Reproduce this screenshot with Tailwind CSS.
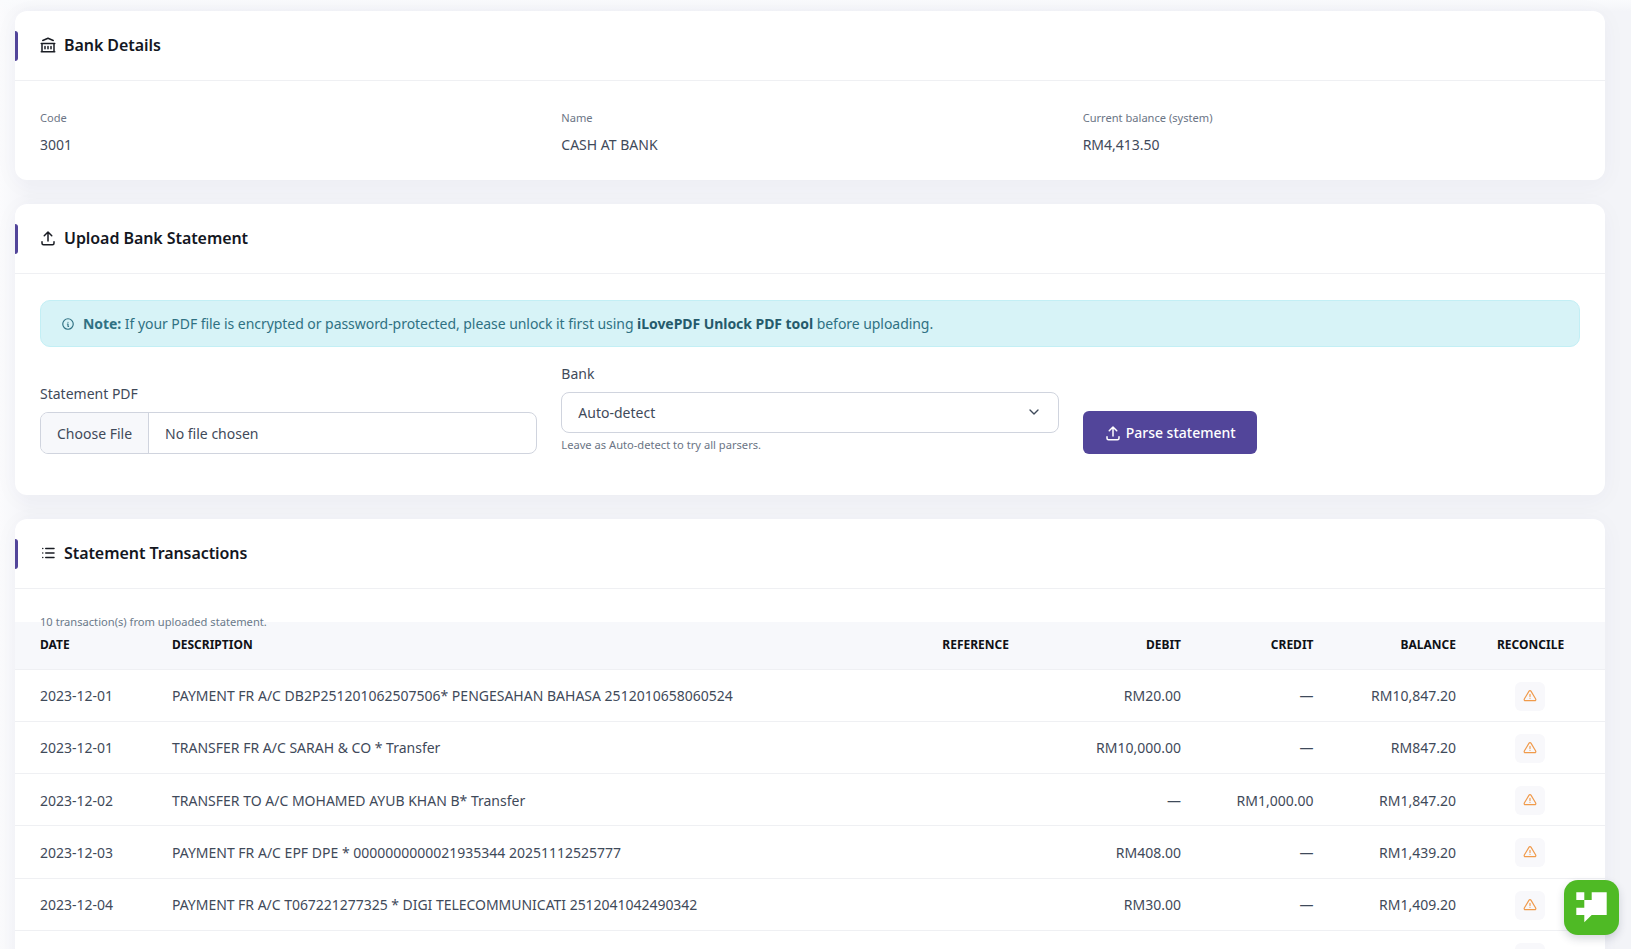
<!DOCTYPE html>
<html lang="en">
<head>
    <meta charset="UTF-8">
    <title>Bank Reconciliation</title>
    <script src="https://cdn.jsdelivr.net/npm/@tailwindcss/browser@4"></script>
</head>
<body class="h-screen overflow-hidden bg-[#f3f4f8] bg-[linear-gradient(180deg,#fafbfd,transparent_12px),linear-gradient(90deg,#fbfbfd,#f3f4f8_30px)] font-['Noto_Sans',sans-serif] text-sm text-[#3f4a5a]">

    <main class="pt-[11px] pl-[15px] pr-[26px] flex flex-col gap-6">

        <!-- Bank details -->
        <section class="bg-white rounded-xl shadow-[0_4px_24px_rgba(50,60,100,0.04)]">
            <header class="relative h-[70px] pl-[25px] pb-[2px] flex items-center gap-[7px] border-b border-[#eff0f3]">
                <span class="absolute left-0 top-5 w-[3px] h-[30px] bg-[#52459a] rounded-r-sm"></span>
                <svg class="-ml-px w-[18px] h-[18px]" viewBox="0 0 24 24" fill="none" stroke="#1a1d24" stroke-width="2" stroke-linecap="round" stroke-linejoin="round"><path d="M3 21l18 0M3 10l18 0M5 6l7 -3l7 3M4 10l0 11M20 10l0 11M8 14l0 3M12 14l0 3M16 14l0 3"/></svg>
                <h2 class="text-base font-semibold tracking-[-0.07px] text-[#14171f]">Bank Details</h2>
            </header>
            <div class="grid grid-cols-3 gap-x-6 px-[25px] pt-[29px] pb-[25px]">
                <div>
                    <p class="text-[11.1px] leading-[16px] text-[#6b7585] mb-2">Code</p>
                    <p class="leading-[21px]">3001</p>
                </div>
                <div>
                    <p class="text-[11.1px] leading-[16px] text-[#6b7585] mb-2">Name</p>
                    <p class="leading-[21px]">CASH AT BANK</p>
                </div>
                <div>
                    <p class="text-[11.1px] leading-[16px] text-[#6b7585] mb-2">Current balance (system)</p>
                    <p class="leading-[21px]">RM4,413.50</p>
                </div>
            </div>
        </section>

        <!-- Upload -->
        <section class="bg-white rounded-xl shadow-[0_4px_24px_rgba(50,60,100,0.04)]">
            <header class="relative h-[70px] pl-[25px] pb-[2px] flex items-center gap-[7px] border-b border-[#eff0f3]">
                <span class="absolute left-0 top-5 w-[3px] h-[30px] bg-[#52459a] rounded-r-sm"></span>
                <svg class="-ml-px w-[18px] h-[18px]" viewBox="0 0 24 24" fill="none" stroke="#1a1d24" stroke-width="2" stroke-linecap="round" stroke-linejoin="round"><path d="M4 17v2a2 2 0 0 0 2 2h12a2 2 0 0 0 2 -2v-2M7 9l5 -5l5 5M12 4l0 12"/></svg>
                <h2 class="text-base font-semibold tracking-[-0.07px] text-[#14171f]">Upload Bank Statement</h2>
            </header>
            <div class="px-[25px] pt-[26px] pb-[41px]">
                <div class="h-[47px] mb-4 pl-5 flex items-center gap-2 rounded-[10px] border border-[#c3eff5] bg-[#d7f3f7] text-[#2f7183]">
                    <svg class="w-[14px] h-[14px]" viewBox="0 0 24 24" fill="none" stroke="currentColor" stroke-width="2" stroke-linecap="round" stroke-linejoin="round"><path d="M3 12a9 9 0 1 0 18 0a9 9 0 0 0 -18 0M12 9h.01M11 12h1v4h1"/></svg>
                    <p class="tracking-[-0.05px]"><b class="font-bold">Note:</b> If your PDF file is encrypted or password-protected, please unlock it first using <b class="font-bold text-[#255a6b]">iLovePDF Unlock PDF tool</b> before uploading.</p>
                </div>
                <form class="grid grid-cols-3 gap-x-6 items-end">
                    <div>
                        <label class="block leading-[21px] mb-2">Statement PDF</label>
                        <input type="file" class="block w-full h-[42px] rounded-lg border border-[#d0d4de] text-sm text-[#3f4a5a] file:h-full file:pt-[2px] file:mr-4 file:px-4 file:border-0 file:border-r file:border-solid file:border-[#d0d4de] file:bg-[#f7f8fb] file:text-sm file:text-[#3f4a5a]">
                    </div>
                    <div class="pb-px">
                        <label class="block leading-[21px] mb-2">Bank</label>
                        <div class="relative">
                            <select class="block w-full h-[41px] pl-4 appearance-none rounded-lg border border-[#d0d4de] bg-white text-sm text-[#3f4a5a]">
                                <option>Auto-detect</option>
                            </select>
                            <svg class="absolute right-[17px] top-[12px] w-4 h-4" viewBox="0 0 24 24" fill="none" stroke="#3f4a5a" stroke-width="2" stroke-linecap="round" stroke-linejoin="round"><path d="M6 9l6 6l6 -6"/></svg>
                        </div>
                        <p class="mt-1 text-[11.15px] leading-[16px] text-[#6b7585]">Leave as Auto-detect to try all parsers.</p>
                    </div>
                    <div>
                        <button type="button" class="h-[43px] w-[174px] pl-[21px] flex items-center gap-1 rounded-md bg-[#52459a] text-sm font-medium text-white">
                            <svg class="w-[18px] h-[18px]" viewBox="0 0 24 24" fill="none" stroke="currentColor" stroke-width="2" stroke-linecap="round" stroke-linejoin="round"><path d="M4 17v2a2 2 0 0 0 2 2h12a2 2 0 0 0 2 -2v-2M7 9l5 -5l5 5M12 4l0 12"/></svg>
                            Parse statement
                        </button>
                    </div>
                </form>
            </div>
        </section>

        <!-- Transactions -->
        <section class="bg-white rounded-xl shadow-[0_4px_24px_rgba(50,60,100,0.04)]">
            <header class="relative h-[70px] pl-[25px] pb-[2px] flex items-center gap-[7px] border-b border-[#eff0f3]">
                <span class="absolute left-0 top-5 w-[3px] h-[30px] bg-[#52459a] rounded-r-sm"></span>
                <svg class="-ml-px w-[18px] h-[18px]" viewBox="0 0 24 24" fill="none" stroke="#1a1d24" stroke-width="2" stroke-linecap="round" stroke-linejoin="round"><path d="M9 6l11 0M9 12l11 0M9 18l11 0M5 6l0 .01M5 12l0 .01M5 18l0 .01"/></svg>
                <h2 class="text-base font-semibold tracking-[-0.07px] text-[#14171f]">Statement Transactions</h2>
            </header>
            <p class="relative z-10 pl-[25px] pt-[25px] text-[11.15px] leading-[16px] text-[#6b7a8a]">10 transaction(s) from uploaded statement.</p>
            <table class="-mt-2 w-full table-fixed border-collapse">
                <colgroup>
                    <col class="w-[141px]">
                    <col>
                    <col class="w-[95px]">
                    <col class="w-[171px]">
                    <col class="w-[133px]">
                    <col class="w-[143px]">
                    <col class="w-[133px]">
                </colgroup>
                <thead>
                    <tr class="h-[47px] bg-[#f7f8fb] border-b border-[#eff0f3] text-xs font-bold uppercase text-[#0f1116]">
                        <th class="pl-[25px] pb-px text-left font-bold">Date</th>
                        <th class="pl-4 pb-px text-left font-bold">Description</th>
                        <th class="pr-4 pb-px text-right font-bold whitespace-nowrap">Reference</th>
                        <th class="pr-[15px] pb-px text-right font-bold">Debit</th>
                        <th class="pr-[15.5px] pb-px text-right font-bold">Credit</th>
                        <th class="pr-4 pb-px text-right font-bold">Balance</th>
                        <th class="pl-[25px] pr-[42px] pb-px text-center font-bold">Reconcile</th>
                    </tr>
                </thead>
                <tbody class="[&_td]:pt-[2px]">
                    <tr class="h-[52.25px] border-b border-[#eff0f3]">
                        <td class="pl-[25px]">2023-12-01</td>
                        <td class="pl-4">PAYMENT FR A/C DB2P251201062507506* PENGESAHAN BAHASA 2512010658060524</td>
                        <td></td>
                        <td class="pr-[15px] text-right">RM20.00</td>
                        <td class="pr-[15.5px] text-right">—</td>
                        <td class="pr-4 text-right">RM10,847.20</td>
                        <td class="pl-[25px] pr-[42px]"><button class="mx-auto w-[30px] h-[29px] pb-px flex items-center justify-center rounded-md bg-[#f8f8fb]"><svg class="w-[14px] h-[14px]" viewBox="0 0 24 24" fill="none" stroke="#f09a4a" stroke-width="2" stroke-linecap="round" stroke-linejoin="round"><path d="M12 9v4M10.363 3.591l-8.106 13.534a1.914 1.914 0 0 0 1.636 2.871h16.214a1.914 1.914 0 0 0 1.636 -2.87l-8.106 -13.536a1.914 1.914 0 0 0 -3.274 0zM12 16h.01"/></svg></button></td>
                    </tr>
                    <tr class="h-[52.25px] border-b border-[#eff0f3]">
                        <td class="pl-[25px]">2023-12-01</td>
                        <td class="pl-4">TRANSFER FR A/C SARAH &amp; CO * Transfer</td>
                        <td></td>
                        <td class="pr-[15px] text-right">RM10,000.00</td>
                        <td class="pr-[15.5px] text-right">—</td>
                        <td class="pr-4 text-right">RM847.20</td>
                        <td class="pl-[25px] pr-[42px]"><button class="mx-auto w-[30px] h-[29px] pb-px flex items-center justify-center rounded-md bg-[#f8f8fb]"><svg class="w-[14px] h-[14px]" viewBox="0 0 24 24" fill="none" stroke="#f09a4a" stroke-width="2" stroke-linecap="round" stroke-linejoin="round"><path d="M12 9v4M10.363 3.591l-8.106 13.534a1.914 1.914 0 0 0 1.636 2.871h16.214a1.914 1.914 0 0 0 1.636 -2.87l-8.106 -13.536a1.914 1.914 0 0 0 -3.274 0zM12 16h.01"/></svg></button></td>
                    </tr>
                    <tr class="h-[52.25px] border-b border-[#eff0f3]">
                        <td class="pl-[25px]">2023-12-02</td>
                        <td class="pl-4">TRANSFER TO A/C MOHAMED AYUB KHAN B* Transfer</td>
                        <td></td>
                        <td class="pr-[15px] text-right">—</td>
                        <td class="pr-[15.5px] text-right">RM1,000.00</td>
                        <td class="pr-4 text-right">RM1,847.20</td>
                        <td class="pl-[25px] pr-[42px]"><button class="mx-auto w-[30px] h-[29px] pb-px flex items-center justify-center rounded-md bg-[#f8f8fb]"><svg class="w-[14px] h-[14px]" viewBox="0 0 24 24" fill="none" stroke="#f09a4a" stroke-width="2" stroke-linecap="round" stroke-linejoin="round"><path d="M12 9v4M10.363 3.591l-8.106 13.534a1.914 1.914 0 0 0 1.636 2.871h16.214a1.914 1.914 0 0 0 1.636 -2.87l-8.106 -13.536a1.914 1.914 0 0 0 -3.274 0zM12 16h.01"/></svg></button></td>
                    </tr>
                    <tr class="h-[52.25px] border-b border-[#eff0f3]">
                        <td class="pl-[25px]">2023-12-03</td>
                        <td class="pl-4">PAYMENT FR A/C EPF DPE * 0000000000021935344 20251112525777</td>
                        <td></td>
                        <td class="pr-[15px] text-right">RM408.00</td>
                        <td class="pr-[15.5px] text-right">—</td>
                        <td class="pr-4 text-right">RM1,439.20</td>
                        <td class="pl-[25px] pr-[42px]"><button class="mx-auto w-[30px] h-[29px] pb-px flex items-center justify-center rounded-md bg-[#f8f8fb]"><svg class="w-[14px] h-[14px]" viewBox="0 0 24 24" fill="none" stroke="#f09a4a" stroke-width="2" stroke-linecap="round" stroke-linejoin="round"><path d="M12 9v4M10.363 3.591l-8.106 13.534a1.914 1.914 0 0 0 1.636 2.871h16.214a1.914 1.914 0 0 0 1.636 -2.87l-8.106 -13.536a1.914 1.914 0 0 0 -3.274 0zM12 16h.01"/></svg></button></td>
                    </tr>
                    <tr class="h-[52.25px] border-b border-[#eff0f3]">
                        <td class="pl-[25px]">2023-12-04</td>
                        <td class="pl-4 tracking-[-0.03px]">PAYMENT FR A/C T067221277325 * DIGI TELECOMMUNICATI 2512041042490342</td>
                        <td></td>
                        <td class="pr-[15px] text-right">RM30.00</td>
                        <td class="pr-[15.5px] text-right">—</td>
                        <td class="pr-4 text-right">RM1,409.20</td>
                        <td class="pl-[25px] pr-[42px]"><button class="mx-auto w-[30px] h-[29px] pb-px flex items-center justify-center rounded-md bg-[#f8f8fb]"><svg class="w-[14px] h-[14px]" viewBox="0 0 24 24" fill="none" stroke="#f09a4a" stroke-width="2" stroke-linecap="round" stroke-linejoin="round"><path d="M12 9v4M10.363 3.591l-8.106 13.534a1.914 1.914 0 0 0 1.636 2.871h16.214a1.914 1.914 0 0 0 1.636 -2.87l-8.106 -13.536a1.914 1.914 0 0 0 -3.274 0zM12 16h.01"/></svg></button></td>
                    </tr>
                    <tr class="h-[52.25px]">
                        <td colspan="6"></td>
                        <td class="pl-[25px] pr-[42px]"><button class="mx-auto w-[30px] h-[29px] pb-px flex items-center justify-center rounded-md bg-[#f8f8fb]"><svg class="w-[14px] h-[14px]" viewBox="0 0 24 24" fill="none" stroke="#f09a4a" stroke-width="2" stroke-linecap="round" stroke-linejoin="round"><path d="M12 9v4M10.363 3.591l-8.106 13.534a1.914 1.914 0 0 0 1.636 2.871h16.214a1.914 1.914 0 0 0 1.636 -2.87l-8.106 -13.536a1.914 1.914 0 0 0 -3.274 0zM12 16h.01"/></svg></button></td>
                    </tr>
                </tbody>
            </table>
        </section>
    </main>

    <!-- chat widget -->
    <button class="fixed left-[1564px] top-[880px] w-[55px] h-[55px] rounded-[14px] bg-[#4fba25] shadow-[0_4px_8px_rgba(40,50,70,0.18)]">
        <svg class="w-[55px] h-[55px]" viewBox="0 0 55 55" fill="#fff"><path d="M20.3 20H27.7V12.3H42.7V35H27.7L20.3 42.3V35H12.3V27.7H20.3ZM12.3 12.3H20.3V20H12.3Z"/></svg>
    </button>
</body>
</html>
